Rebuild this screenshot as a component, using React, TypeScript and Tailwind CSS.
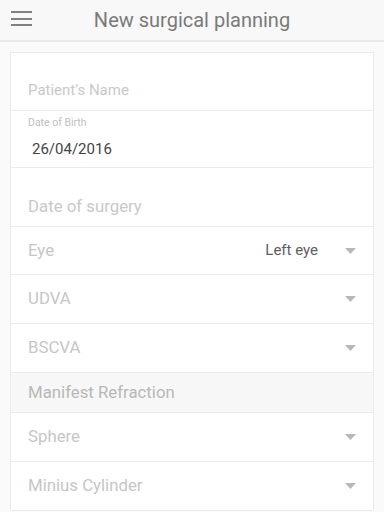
import React from "react";

function Caret() {
    return (
        <svg width="11" height="6" viewBox="0 0 11 6" className="shrink-0">
            <path d="M0 0h11L5.5 6z" fill="#b8b8b8" />
        </svg>
    );
}

function SelectRow({ label, value }: { label: string; value?: string }) {
    return (
        <div className="h-[49px] border-b border-[#ebebeb] flex items-center pl-[17px] pr-[17px]">
            <span className="flex-1 text-[16.8px] text-[#c6c6c6]">{label}</span>
            {value && <span className="text-[15px] text-[#5e5e5e] mr-[27px]">{value}</span>}
            <Caret />
        </div>
    );
}

export default function App() {
    return (
        <div className="w-[384px] h-[512px] overflow-hidden bg-[#fafafa]" style={{ fontFamily: "Roboto, 'Noto Sans', sans-serif" }}>
            <header className="h-[42px] bg-[#f8f8f8] border-b-2 border-[#e8e8e8] flex items-center relative">
                <div className="absolute left-[11px] top-[11px] flex flex-col gap-[4.5px]">
                    <span className="block w-[21px] h-[2px] bg-[#808080]" />
                    <span className="block w-[21px] h-[2px] bg-[#808080]" />
                    <span className="block w-[21px] h-[2px] bg-[#808080]" />
                </div>
                <h1 className="flex-1 text-center text-[20px] text-[#7a7a7a] font-normal leading-none">New surgical planning</h1>
            </header>

            <div className="mx-[10px] mt-[10px] bg-white border border-[#ebebeb] border-b-0">
                <div className="h-[58px] border-b border-[#ebebeb] pt-[27px] pl-[17px]">
                    <span className="block text-[15px] leading-[20px] text-[#c9c9c9]">Patient’s Name</span>
                </div>
                <div className="h-[57px] border-b border-[#ebebeb] pt-[6px] pl-[17px]">
                    <span className="block text-[10.5px] leading-[12px] text-[#c0c0c0]">Date of Birth</span>
                    <span className="block mt-[10px] pl-[4px] text-[15px] leading-[20px] text-[#444]">26/04/2016</span>
                </div>
                <div className="h-[59px] border-b border-[#ebebeb] pt-[28px] pl-[17px]">
                    <span className="block text-[16.8px] leading-[20px] text-[#c9c9c9]">Date of surgery</span>
                </div>
                <div className="h-[48px] border-b border-[#ebebeb] flex items-center pl-[17px] pr-[17px]">
                    <span className="flex-1 text-[16.8px] text-[#c6c6c6]">Eye</span>
                    <span className="text-[15px] text-[#5e5e5e] mr-[27px]">Left eye</span>
                    <Caret />
                </div>
                <SelectRow label="UDVA" />
                <SelectRow label="BSCVA" />
                <div className="h-[40px] border-b border-[#ebebeb] bg-[#f7f7f7] flex items-center pl-[17px]">
                    <span className="text-[16.8px] text-[#b8b8b8]">Manifest Refraction</span>
                </div>
                <SelectRow label="Sphere" />
                <SelectRow label="Minius Cylinder" />
            </div>
        </div>
    );
}
